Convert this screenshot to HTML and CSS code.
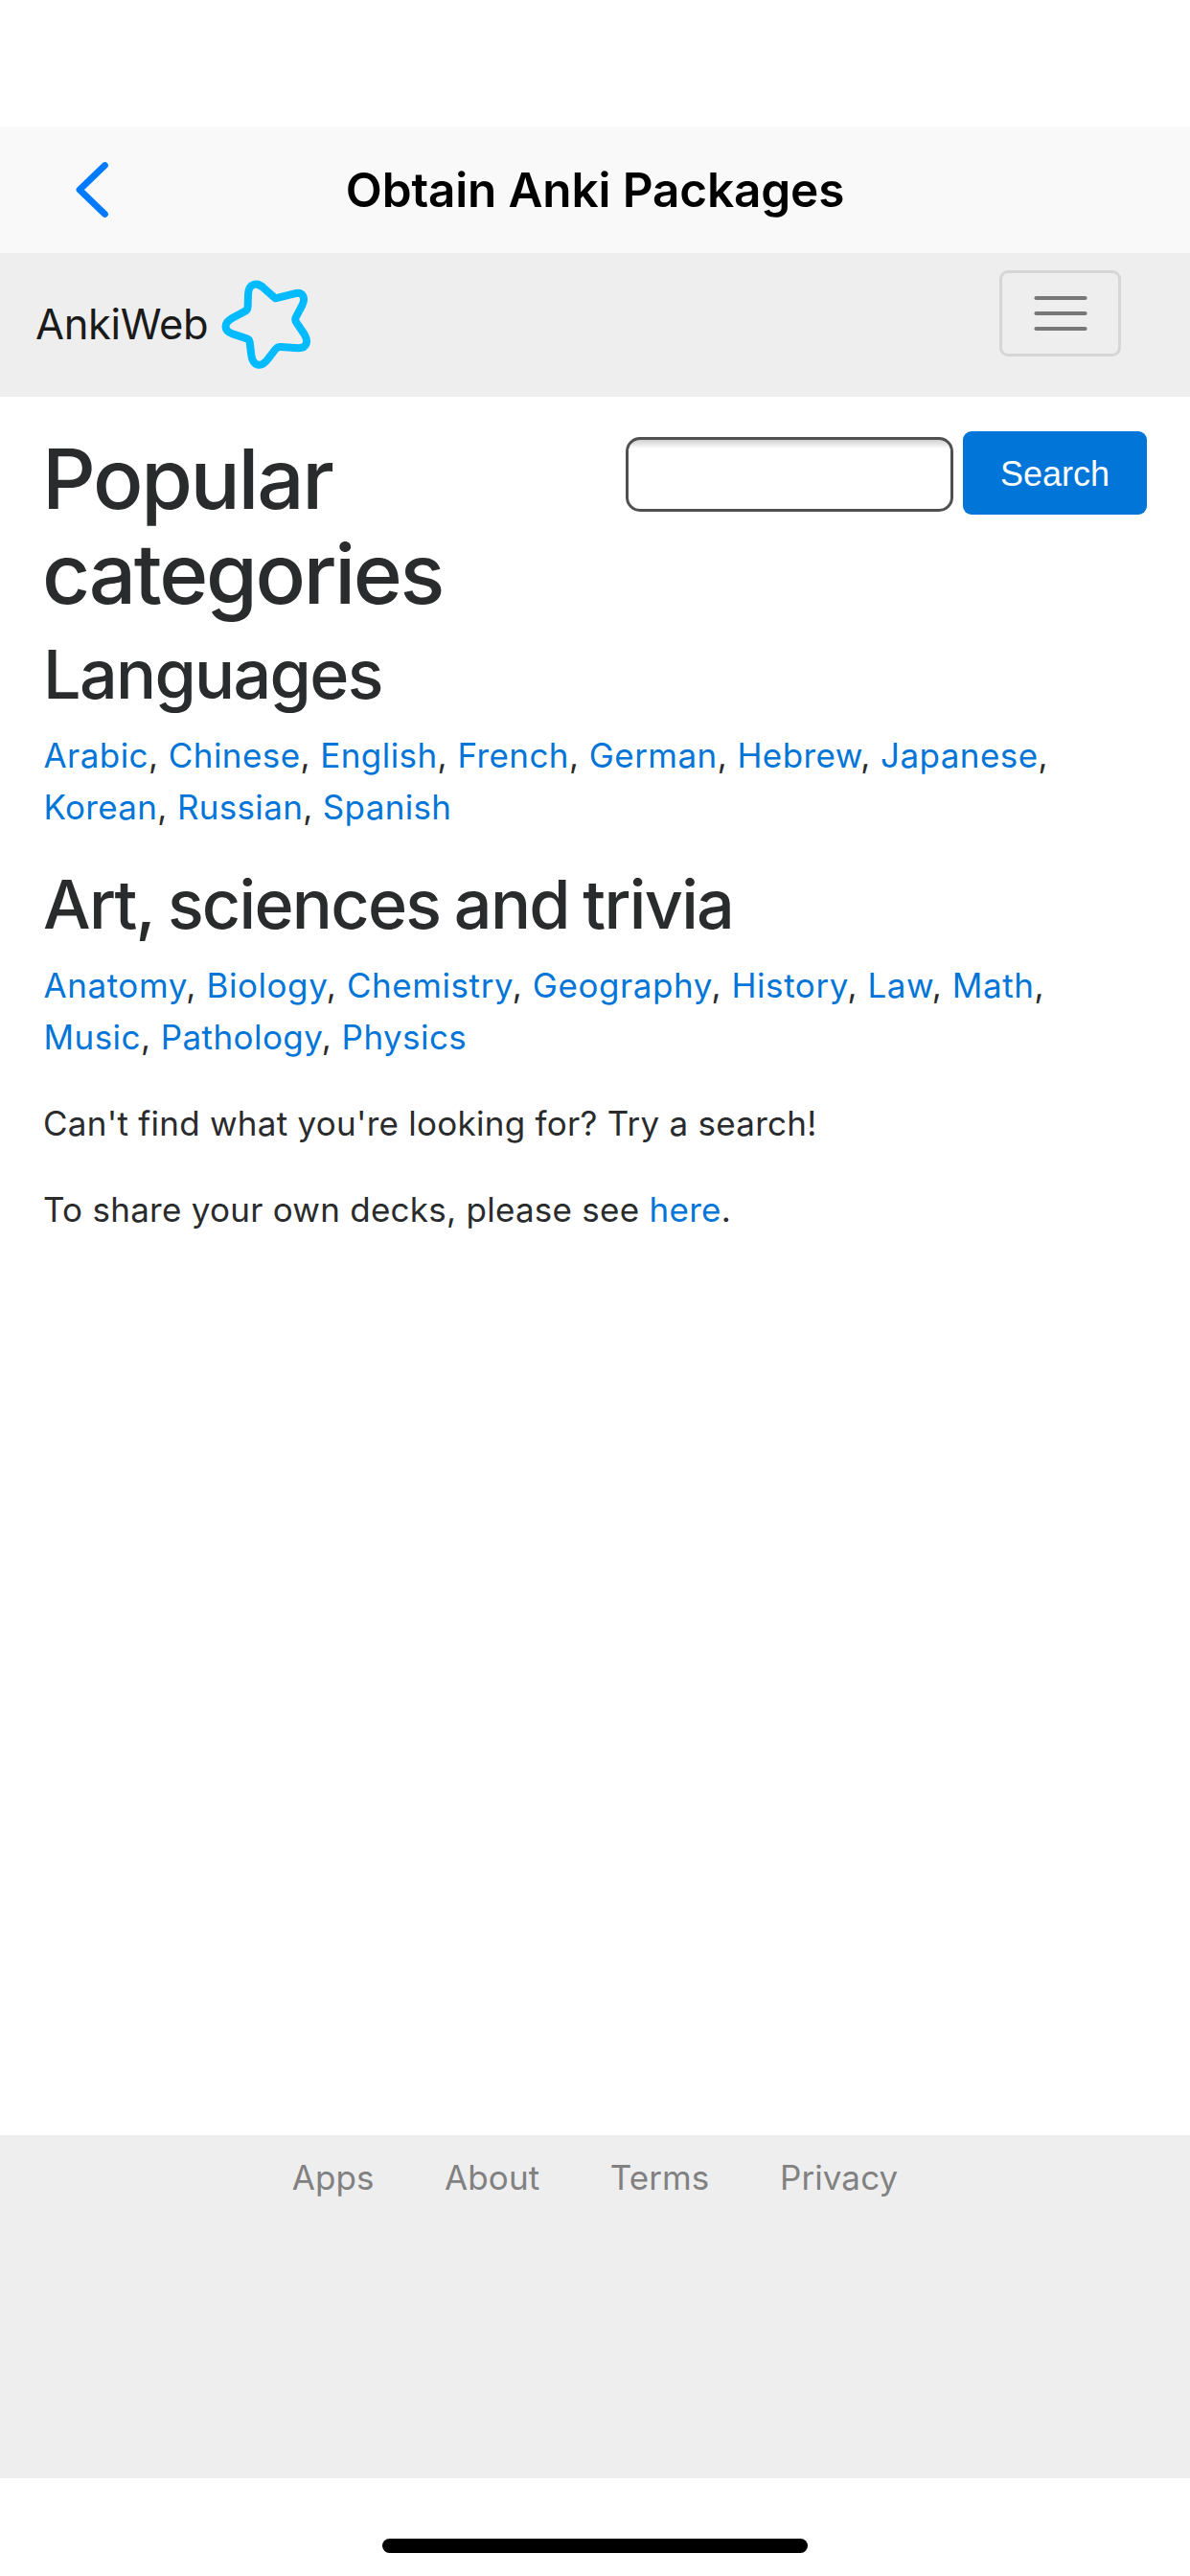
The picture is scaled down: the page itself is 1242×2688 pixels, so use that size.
FILE: index.html
```html
<!DOCTYPE html>
<html lang="en">
<head>
<meta charset="utf-8">
<title>Obtain Anki Packages</title>
<link rel="stylesheet" href="styles.css">
</head>
<body>
<div class="screen">
  <header class="titlebar">
    <svg class="back" viewBox="0 0 36 60" aria-label="Back"><path d="M31.5 4.5 5 30l26.500 25.500"/></svg>
    <h1 class="title">Obtain Anki Packages</h1>
  </header>
  <nav class="navbar">
    <a class="brand" href="#">
      <span class="brand-name">AnkiWeb</span>
      <svg class="star" viewBox="30 30 288 288"><path d="M202 94 167 63C145 41 118 47 117 82L116 118Q116 130 108 134L68 155C38 172 40 196 70 206L113 220Q121 222 122 232L127 272C132 307 158 312 179 284L202 254Q209 245 220 246L275 250C300 250 306 230 294 208L271 174Q261 163 267 152L286 116C298 92 288 72 262 79Z"/></svg>
    </a>
    <button class="toggler" aria-label="Menu">
      <svg class="bars" viewBox="0 0 60 40"><path d="M4.500 4h51M4.500 20h51M4.500 36h51"/></svg>
    </button>
  </nav>
  <main class="content">
    <div class="top">
      <h1 class="heading">Popular<br>categories</h1>
      <form class="search">
        <input class="field" type="text" aria-label="Search">
        <button class="submit" type="button">Search</button>
      </form>
    </div>
    <h2 class="section">Languages</h2>
    <p class="links languages"><a href="#">Arabic</a>, <a href="#">Chinese</a>, <a href="#">English</a>, <a href="#">French</a>, <a href="#">German</a>, <a href="#">Hebrew</a>, <a href="#">Japanese</a>,<br><span class="last-line"><a href="#">Korean</a>, <a href="#">Russian</a>, <a href="#">Spanish</a></span></p>
    <h2 class="section subjects-title">Art, sciences and trivia</h2>
    <p class="links subjects"><a href="#">Anatomy</a>, <a href="#">Biology</a>, <a href="#">Chemistry</a>, <a href="#">Geography</a>, <a href="#">History</a>, <a href="#">Law</a>, <a href="#">Math</a>,<br><span class="last-line"><a href="#">Music</a>, <a href="#">Pathology</a>, <a href="#">Physics</a></span></p>
    <p class="note">Can't find what you're looking for? Try a search!</p>
    <p class="note">To share your own decks, please see <a href="#">here</a>.</p>
  </main>
  <footer class="footer">
    <a href="#">Apps</a>
    <a href="#">About</a>
    <a href="#">Terms</a>
    <a href="#">Privacy</a>
  </footer>
  <div class="home"><div class="home-bar"></div></div>
</div>
</body>
</html>
```
FILE: styles.css
```css
* { box-sizing: border-box; }
body, h1, h2, p { margin: 0; }
body {
  background: #fff;
  color: #292b2c;
  font: 400 35px/54px Inter, "Liberation Sans", sans-serif;
}
a { color: #0275d8; text-decoration: none; }
svg { display: block; fill: none; flex: none; }

.screen {
  display: flex;
  flex-direction: column;
  height: 2688px;
  padding-top: 132px;
}

.titlebar {
  display: grid;
  grid-template-columns: 1fr auto 1fr;
  align-items: center;
  height: 132px;
  flex: none;
  background: #f9f9f9;
}
.back {
  width: 36px;
  height: 60px;
  margin: -1px 0 0 78px;
  stroke: #007aff;
  stroke-width: 6.800;
  stroke-linecap: round;
  stroke-linejoin: round;
}
.title {
  grid-column: 2;
  color: #000;
  font-size: 49.5px;
  font-weight: 600;
  line-height: 60px;
  letter-spacing: -0.15px;
}

.navbar {
  display: flex;
  justify-content: space-between;
  align-items: flex-start;
  height: 150px;
  flex: none;
  padding: 18px 72px 0 37px;
  background: #eee;
}
.brand { display: flex; align-items: center; padding-top: 8px; }
.brand-name {
  color: #1a1a1a;
  width: 193px;
  font-size: 43.5px;
  letter-spacing: -0.35px;
}
.star {
  width: 96px;
  height: 96px;
  stroke: #00bbff;
  stroke-width: 24;
  stroke-linejoin: round;
}
.toggler {
  display: grid;
  place-items: center;
  width: 127px;
  height: 90px;
  padding: 0;
  border: 3px solid #d6d6d6;
  border-radius: 9px;
  background: none;
}
.bars {
  width: 60px;
  height: 40px;
  stroke: #777;
  stroke-width: 4.200;
  stroke-linecap: round;
}

.content { flex: 1; padding: 36px 45px 0; }
.top {
  display: flex;
  justify-content: space-between;
  align-items: flex-start;
  margin-bottom: 16px;
}
.heading {
  margin-left: -1px;
  font-size: 87px;
  font-weight: 500;
  line-height: 99px;
  letter-spacing: -2.33px;
}
.search { display: flex; align-items: flex-start; gap: 10px; }
.field {
  width: 342px;
  height: 78px;
  margin: 6px 0 0;
  border: 3px solid #505050;
  border-radius: 15px;
  background: linear-gradient(#d0ced0, #fff 9px);
}
.submit {
  width: 192px;
  height: 87px;
  padding: 2px 0 0;
  border: 0;
  border-radius: 9px;
  background: #0275d8;
  color: #fff;
  font: 36px/54px "Liberation Sans", Arial, sans-serif;
}
.section {
  margin-bottom: 17px;
  font-size: 70px;
  font-weight: 500;
  line-height: 79.5px;
  letter-spacing: -1.68px;
}
.subjects-title {
  margin: 35px 0 18px;
  letter-spacing: -1.72px;
  word-spacing: -2.4px;
}
.links { padding-left: 0.5px; white-space: nowrap; }
.languages { letter-spacing: 0.43px; }
.languages .last-line { letter-spacing: 0.33px; }
.subjects { letter-spacing: 0.57px; margin-bottom: 36px; }
.subjects .last-line { letter-spacing: 0.43px; }
.note { margin-bottom: 36px; letter-spacing: 0.26px; }

.footer {
  display: flex;
  justify-content: center;
  gap: 73.5px;
  height: 358px;
  flex: none;
  padding-top: 17px;
  background: #eee;
}
.footer a { color: #818181; letter-spacing: 0.1px; }
.home {
  display: flex;
  justify-content: center;
  height: 102px;
  flex: none;
  padding-top: 63px;
}
.home-bar { width: 444px; height: 15px; border-radius: 8px; background: #000; }
```
